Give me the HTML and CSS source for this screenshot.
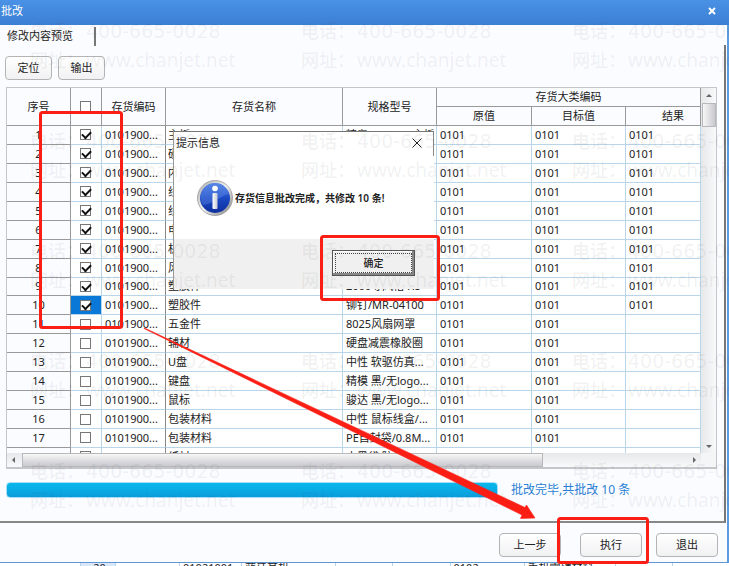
FILE: index.html
```html
<!DOCTYPE html>
<html lang="zh-CN">
<head>
<meta charset="utf-8">
<title>批改</title>
<link rel="stylesheet" href="styles.css">
</head>
<body>
<div class="window">
  <header class="titlebar">
    <span>批改</span>
    <button class="close" type="button" aria-label="关闭"><svg width="8" height="8" viewBox="0 0 8 8"><path d="M1 1l6 6M7 1L1 7" stroke="#fff" stroke-width="2"/></svg></button>
  </header>
  <nav class="tabs"><a class="tab" href="#preview">修改内容预览</a></nav>
  <main class="panel" id="preview">
    <div class="toolbar">
      <button class="btn small" type="button">定位</button>
      <button class="btn small" type="button">输出</button>
    </div>
    <div class="grid">
      <div class="viewport">
        <table>
          <colgroup><col class="c-seq"><col class="c-check"><col class="c-code"><col><col class="c-spec"><col class="c-old"><col class="c-target"><col class="c-result"></colgroup>
          <thead>
            <tr><th rowspan="2">序号</th><th rowspan="2"><input type="checkbox" aria-label="全选"></th><th rowspan="2">存货编码</th><th rowspan="2">存货名称</th><th rowspan="2">规格型号</th><th colspan="3">存货大类编码</th></tr>
            <tr><th>原值</th><th>目标值</th><th class="result">结果</th></tr>
          </thead>
          <tbody>
            <tr><td>1</td><td><input type="checkbox" aria-label="1" checked></td><td>0101900...</td><td>主板</td><td>精粤/H310M-主板</td><td>0101</td><td>0101</td><td>0101</td></tr>
            <tr><td>2</td><td><input type="checkbox" aria-label="2" checked></td><td>0101900...</td><td>硬盘</td><td></td><td>0101</td><td>0101</td><td>0101</td></tr>
            <tr><td>3</td><td><input type="checkbox" aria-label="3" checked></td><td>0101900...</td><td>内存</td><td></td><td>0101</td><td>0101</td><td>0101</td></tr>
            <tr><td>4</td><td><input type="checkbox" aria-label="4" checked></td><td>0101900...</td><td>线材</td><td></td><td>0101</td><td>0101</td><td>0101</td></tr>
            <tr><td>5</td><td><input type="checkbox" aria-label="5" checked></td><td>0101900...</td><td>线材</td><td></td><td>0101</td><td>0101</td><td>0101</td></tr>
            <tr><td>6</td><td><input type="checkbox" aria-label="6" checked></td><td>0101900...</td><td>电源</td><td></td><td>0101</td><td>0101</td><td>0101</td></tr>
            <tr><td>7</td><td><input type="checkbox" aria-label="7" checked></td><td>0101900...</td><td>机箱</td><td></td><td>0101</td><td>0101</td><td>0101</td></tr>
            <tr><td>8</td><td><input type="checkbox" aria-label="8" checked></td><td>0101900...</td><td>风扇</td><td></td><td>0101</td><td>0101</td><td>0101</td></tr>
            <tr><td>9</td><td><input type="checkbox" aria-label="9" checked></td><td>0101900...</td><td>塑胶件</td><td>2000导风槽-X8</td><td>0101</td><td>0101</td><td>0101</td></tr>
            <tr><td>10</td><td class="active"><input type="checkbox" aria-label="10" checked></td><td>0101900...</td><td>塑胶件</td><td>铆钉/MR-04100</td><td>0101</td><td>0101</td><td>0101</td></tr>
            <tr><td>11</td><td><input type="checkbox" aria-label="11"></td><td>0101900...</td><td>五金件</td><td>8025风扇网罩</td><td>0101</td><td>0101</td><td></td></tr>
            <tr><td>12</td><td><input type="checkbox" aria-label="12"></td><td>0101900...</td><td>辅材</td><td>硬盘减震橡胶圈</td><td>0101</td><td>0101</td><td></td></tr>
            <tr><td>13</td><td><input type="checkbox" aria-label="13"></td><td>0101900...</td><td>U盘</td><td>中性 软驱仿真...</td><td>0101</td><td>0101</td><td></td></tr>
            <tr><td>14</td><td><input type="checkbox" aria-label="14"></td><td>0101900...</td><td>键盘</td><td>精模 黑/无logo...</td><td>0101</td><td>0101</td><td></td></tr>
            <tr><td>15</td><td><input type="checkbox" aria-label="15"></td><td>0101900...</td><td>鼠标</td><td>骏达 黑/无logo...</td><td>0101</td><td>0101</td><td></td></tr>
            <tr><td>16</td><td><input type="checkbox" aria-label="16"></td><td>0101900...</td><td>包装材料</td><td>中性 鼠标线盒/...</td><td>0101</td><td>0101</td><td></td></tr>
            <tr><td>17</td><td><input type="checkbox" aria-label="17"></td><td>0101900...</td><td>包装材料</td><td>PE自封袋/0.8M...</td><td>0101</td><td>0101</td><td></td></tr>
            <tr><td></td><td><input type="checkbox" aria-label="18"></td><td></td><td>纸材</td><td>大黑袋 防湿</td><td></td><td></td><td></td></tr>
          </tbody>
        </table>
      </div>
      <div class="vscroll"><i class="arrow up"></i><i class="vthumb"></i><i class="arrow down"></i></div>
      <div class="hscroll"><i class="arrow left"></i><i class="hthumb"></i><i class="arrow right"></i></div>
      <div class="corner"></div>
    </div>
    <div class="status">
      <div class="progress" role="progressbar" aria-valuenow="100" aria-label="批改进度"></div>
      <span>批改完毕,共批改 10 条</span>
    </div>
  </main>
  <footer class="actions">
    <button class="btn" type="button">上一步</button>
    <button class="btn execute" type="button">执行</button>
    <button class="btn" type="button">退出</button>
  </footer>
</div>
<div class="behind">
  <span class="b-num">20</span><span class="b-box"></span><span class="b-code">01021001</span><span class="b-name">蓝牙耳机</span><span></span><span></span><span class="b-class">0102</span><span class="b-type">手机零辅材料</span><span></span><span></span>
</div>

<section class="dialog" role="dialog" aria-labelledby="dialog-title">
  <div class="dialog-head">
    <span id="dialog-title">提示信息</span>
    <button class="dialog-close" type="button" aria-label="关闭"><svg width="10" height="10" viewBox="0 0 10 10"><path d="M.5.5l9 9M9.500.500l-9 9" stroke="#222" fill="none"/></svg></button>
  </div>
  <div class="dialog-body">
    <svg width="36" height="36" viewBox="0 0 36 36">
      <defs>
        <linearGradient id="rim" x1="0" y1="0" x2="1" y2="1"><stop offset="0" stop-color="#aaa"/><stop offset=".5" stop-color="#f2f2f2"/><stop offset="1" stop-color="#777"/></linearGradient>
        <linearGradient id="disc" x1="0" y1="0" x2="0" y2="1"><stop offset="0" stop-color="#4b7be0"/><stop offset=".5" stop-color="#1b49c4"/><stop offset="1" stop-color="#0e2f9e"/></linearGradient>
        <linearGradient id="stem" x1="0" y1="0" x2="1" y2="0"><stop offset="0" stop-color="#fff"/><stop offset="1" stop-color="#c4c8d4"/></linearGradient>
      </defs>
      <circle cx="18" cy="18" r="17.500" fill="url(#rim)" stroke="#999" stroke-width=".8"/>
      <circle cx="18" cy="18" r="15" fill="url(#disc)"/>
      <path d="M3.500 17.500A14.500 14.500 0 0 1 32 14C25 15 16 24 6 25Q4 22 3.500 17.500Z" fill="#7ba4f5" opacity=".3"/>
      <circle cx="18" cy="8.500" r="2.800" fill="#fff"/>
      <rect x="15.500" y="13" width="5" height="16" rx="1" fill="url(#stem)"/>
    </svg>
    <span>存货信息批改完成，共修改 10 条!</span>
  </div>
  <div class="dialog-foot"><button class="ok" type="button"><span>确定</span></button></div>
</section>

<div class="watermarks" aria-hidden="true">
  <p><b>电话：</b><span>400-665-0028</span><b>网址：</b><em>www.chanjet.net</em></p><p><b>电话：</b><span>400-665-0028</span><b>网址：</b><em>www.chanjet.net</em></p><p><b>电话：</b><span>400-665-0028</span><b>网址：</b><em>www.chanjet.net</em></p>
  <p><b>电话：</b><span>400-665-0028</span><b>网址：</b><em>www.chanjet.net</em></p><p><b>电话：</b><span>400-665-0028</span><b>网址：</b><em>www.chanjet.net</em></p><p><b>电话：</b><span>400-665-0028</span><b>网址：</b><em>www.chanjet.net</em></p>
  <p><b>电话：</b><span>400-665-0028</span><b>网址：</b><em>www.chanjet.net</em></p><p><b>电话：</b><span>400-665-0028</span><b>网址：</b><em>www.chanjet.net</em></p><p><b>电话：</b><span>400-665-0028</span><b>网址：</b><em>www.chanjet.net</em></p>
  <p><b>电话：</b><span>400-665-0028</span><b>网址：</b><em>www.chanjet.net</em></p><p><b>电话：</b><span>400-665-0028</span><b>网址：</b><em>www.chanjet.net</em></p><p><b>电话：</b><span>400-665-0028</span><b>网址：</b><em>www.chanjet.net</em></p>
  <p><b>电话：</b><span>400-665-0028</span><b>网址：</b><em>www.chanjet.net</em></p><p><b>电话：</b><span>400-665-0028</span><b>网址：</b><em>www.chanjet.net</em></p><p><b>电话：</b><span>400-665-0028</span><b>网址：</b><em>www.chanjet.net</em></p>
</div>

<svg class="marks" width="729" height="566" viewBox="0 0 729 566" aria-hidden="true">
  <g fill="none" stroke="#fb1e14" stroke-width="3">
    <rect x="40.500" y="112.500" width="81" height="215" rx="2"/>
    <rect x="321.500" y="236.500" width="117" height="63" rx="2"/>
    <rect x="558.500" y="518.500" width="89" height="44" rx="2"/>
  </g>
  <path d="M144 328.500L144.500 328L525 507.500L526.500 505L535 518L520.500 518.500L522 515Z" fill="#fb1e14" stroke="#fb1e14" stroke-width=".6"/>
</svg>
</body>
</html>
```
FILE: styles.css
```css
* { box-sizing: border-box; }

body {
  margin: 0;
  height: 100vh;
  overflow: hidden;
  position: relative;
  display: flex;
  flex-direction: column;
  background: #fff;
  color: #222;
  font: 11px/14px "Noto Sans", "Noto Sans CJK SC", sans-serif;
}

button, input { font: inherit; color: inherit; margin: 0; padding: 0; }

.window {
  flex: 1;
  min-height: 0;
  display: flex;
  flex-direction: column;
  background: #fbfcff;
  border-right: 2px solid #5b9be0;
  border-bottom: 1px solid #5f96d8;
}

.titlebar {
  height: 25px;
  flex: none;
  display: flex;
  align-items: center;
  justify-content: space-between;
  padding: 0 11px 3px 1px;
  margin-right: -2px;
  color: #fff;
  background: linear-gradient(#4a92e6, #3b7fd3);
}

.close, .dialog-close { border: 0; background: none; display: flex; padding: 2px; }

.tabs { height: 20px; flex: none; display: flex; }
.tab {
  width: 96px;
  padding: 2px 0 0 7px;
  margin-top: 2px;
  height: 19px;
  line-height: 14px;
  color: inherit;
  text-decoration: none;
  border-right: 2px solid #777;
}

.panel {
  flex: 1;
  min-height: 0;
  margin-right: 1px;
  display: flex;
  flex-direction: column;
  border-right: 2px solid #777;
  border-bottom: 2px solid #888;
}

.toolbar { display: flex; gap: 6px; padding: 11px 5px 7px; }

.btn {
  width: 62px;
  height: 24px;
  border: 1px solid #b4b4b4;
  border-radius: 4px;
  background: linear-gradient(#fff, #f1f1f3);
}
.btn.small { width: 47px; }

.grid {
  flex: 1;
  min-height: 0;
  margin: 0 7px 0 6px;
  display: grid;
  grid-template: minmax(0, 1fr) 14px / minmax(0, 1fr) 15px;
  border: 1px solid #c4c6ca;
  border-bottom-width: 2px;
}

.viewport { overflow: hidden; }

table {
  width: 100%;
  height: 379px;
  table-layout: fixed;
  border-collapse: separate;
  border-spacing: 0;
}
.c-seq, .c-code { width: 64px; }
.c-check { width: 31px; }
.c-spec, .c-target { width: 94px; }
.c-old { width: 95px; }
.c-result { width: 75px; }

th, td { padding: 0; white-space: nowrap; overflow: hidden; }
th {
  height: 19px;
  font-weight: 400;
  background: #fbfcff;
  border-right: 1px solid #999;
  border-bottom: 1px solid #999;
}
th.result { padding-left: 20px; }
td {
  padding-left: 3px;
  line-height: 14px;
  background: #fff;
  border-right: 1px solid #b9d5ea;
  border-bottom: 1px solid #b9d5ea;
}
td:first-child {
  text-align: center;
  padding: 0;
  background: #fbfcff;
  border-color: #999;
}
td:nth-child(2) { text-align: center; padding: 0; }
td:nth-child(3) { border-right-color: #888; }
td:nth-child(4) { padding-left: 2px; }
td.active { background: #0a78d6; }

input[type="checkbox"] {
  appearance: none;
  display: block;
  width: 11px;
  height: 11px;
  margin: 0 9px;
  border: 1px solid #777;
  background: #fff;
}
input[type="checkbox"]:checked::before {
  content: "";
  display: block;
  width: 7px;
  height: 4px;
  margin: 1px;
  border: solid #111;
  border-width: 0 0 2px 2px;
  transform: rotate(-45deg);
}

.vscroll {
  display: flex;
  flex-direction: column;
  align-items: center;
  background: linear-gradient(90deg, #e6e8ea, #f8f9fa);
}
.hscroll {
  display: flex;
  align-items: center;
  background: linear-gradient(#e6e8ea, #f8f9fa);
}
.corner { background: #f4f5f7; }
.vthumb {
  width: 14px;
  height: 24px;
  margin-top: 6px;
  border: 1px solid #b8b8bc;
  background: linear-gradient(90deg, #f7f7f7, #c9c9cf);
}
.hthumb {
  flex: 0 1 75%;
  height: 14px;
  margin-left: 7px;
  border: 1px solid #b8b8bc;
  background: linear-gradient(#f7f7f7, #c9c9cf);
}
.arrow { width: 0; height: 0; border: 3px solid transparent; }
.up { border-bottom-color: #666; border-top: 0; margin-top: 6px; }
.down { border-top-color: #666; border-bottom: 0; margin: auto 0 5px; }
.left { border-right-color: #666; border-left: 0; margin-left: 5px; }
.right { border-left-color: #666; border-right: 0; margin: 0 5px 0 auto; }

.status {
  display: flex;
  align-items: center;
  gap: 13px;
  padding: 13px 6px 23px;
  color: #2a7fd4;
  font-size: 12px;
}
.progress {
  flex: 0 1 492px;
  height: 16px;
  border: 1px solid #a8def5;
  border-radius: 4px;
  background: linear-gradient(#08b9ee, #0a9ddb);
}

.actions {
  flex: none;
  display: flex;
  justify-content: flex-end;
  gap: 14px;
  padding: 10px 9px 5px;
}
.execute { margin-left: 5px; }

.behind {
  flex: none;
  height: 3px;
  overflow: hidden;
  display: flex;
  padding-left: 80px;
  line-height: 10px;
}
.behind span { flex: 1; height: 12px; border-left: 1px solid #b9d5ea; padding-left: 3px; white-space: nowrap; }
.behind .b-num { flex: 0 0 35px; background: #d9e7f8; text-align: center; }
.behind .b-box { flex: 0 0 64px; }
.behind .b-code { flex: 0 0 62px; }
.behind .b-name { flex: 0 0 94px; }
.behind .b-class { flex: 0 0 74px; }
.behind .b-type { flex: 0 0 91px; }

.dialog {
  position: absolute;
  left: 173px;
  top: 131px;
  width: 261px;
  background: #fff;
  border-top: 1px solid #777;
  border-left: 1px solid #999;
}
.dialog-head {
  height: 24px;
  display: flex;
  justify-content: space-between;
  align-items: center;
  padding: 0 9px 2px 2px;
  border-right: 1px solid #888;
}
.dialog-body {
  height: 83px;
  display: flex;
  align-items: center;
  gap: 2px;
  padding-left: 23px;
  font-size: 10px;
  font-weight: 600;
}
.dialog-foot {
  height: 50px;
  display: flex;
  justify-content: flex-end;
  align-items: center;
  padding: 0 19px 2px 0;
  background: #f0f0f0;
}
.ok {
  width: 83px;
  height: 26px;
  padding: 2px;
  border: 1px solid #555;
  background: #f0f0f0;
  box-shadow: inset -2px -2px #888, inset 1px 1px #fff;
  font-size: 10px;
  font-weight: 500;
}
.ok span { display: block; height: 20px; line-height: 18px; border: 1px dotted #444; }

.watermarks {
  position: absolute;
  inset: 20px 0 0 30px;
  overflow: hidden;
  display: grid;
  grid-template-columns: repeat(3, 271px);
  grid-auto-rows: 110px;
  color: rgba(60, 60, 70, .08);
  pointer-events: none;
}
.watermarks p {
  margin: 0;
  display: grid;
  grid-template-columns: 56px 1fr;
  grid-auto-rows: 29px;
  align-content: start;
  line-height: 22px;
  white-space: nowrap;
}
.watermarks b { font-size: 18px; font-weight: 500; }
.watermarks span { font-family: "DejaVu Sans", sans-serif; font-size: 19px; }
.watermarks em { font-style: normal; font-size: 19px; }

.marks { position: absolute; left: 0; top: 0; pointer-events: none; }
```
